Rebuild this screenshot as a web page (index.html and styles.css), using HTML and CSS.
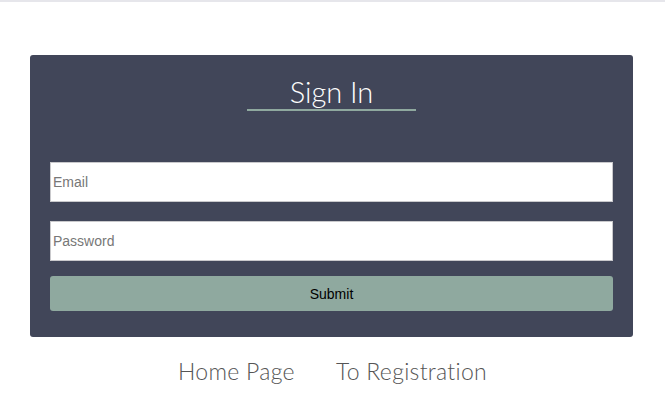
FILE: index.html
```html
<!DOCTYPE html>
<html>
<head>
<meta charset="utf-8">
<link rel="stylesheet" href="styles.css">
</head>
<body>
<div class="topline"></div>
<main class="page">
  <form class="card">
    <div class="title-wrap">
      <h1 class="title">Sign In</h1>
    </div>
    <input class="field field-email" type="text" placeholder="Email">
    <input class="field field-pass" type="password" placeholder="Password">
    <button class="submit" type="button">Submit</button>
  </form>
  <nav class="links">
    <a class="link" href="#">Home Page</a>
    <a class="link" href="#">To Registration</a>
  </nav>
</main>
</body>
</html>
```
FILE: styles.css
```css
html, body {
  margin: 0;
  padding: 0;
  background: #ffffff;
}
.topline {
  height: 2px;
  background: #e6e6eb;
}
.page {
  display: flex;
  flex-direction: column;
  padding: 53px 32px 0 30px;
}
.card {
  background: #414659;
  border-radius: 3px;
  padding: 0 20px 26px 20px;
  display: flex;
  flex-direction: column;
}
.title-wrap {
  display: flex;
  justify-content: center;
  padding-top: 20px;
  margin-bottom: 51px;
}
.title {
  margin: 0;
  width: 169px;
  text-align: center;
  font-family: "Lato", "Open Sans", sans-serif;
  font-weight: 300;
  font-size: 29px;
  line-height: 33px;
  color: #ffffff;
  border-bottom: 2px solid #8fa99f;
  padding-bottom: 1px;
}
.field {
  box-sizing: border-box;
  height: 40px;
  margin: 0;
  border: 1px solid #c9c9cc;
  border-radius: 0;
  padding: 0 2px;
  font-family: "Liberation Sans", Arial, sans-serif;
  font-size: 14px;
  background: #ffffff;
  outline: none;
}
.field::placeholder {
  color: #777777;
}
.field-email {
  margin-bottom: 19px;
}
.field-pass {
  margin-bottom: 15px;
}
.submit {
  height: 35px;
  border: none;
  border-radius: 3px;
  background: #8fa99f;
  font-family: "Liberation Sans", Arial, sans-serif;
  font-size: 14px;
  color: #000000;
  padding: 0;
}
.links {
  display: flex;
  justify-content: center;
  gap: 41px;
  padding-top: 19px;
  padding-left: 2px;
}
.link {
  font-family: "Lato", "Open Sans", sans-serif;
  font-weight: 300;
  font-size: 23px;
  letter-spacing: 0.3px;
  line-height: 30px;
  color: #555555;
  text-decoration: none;
}
```
